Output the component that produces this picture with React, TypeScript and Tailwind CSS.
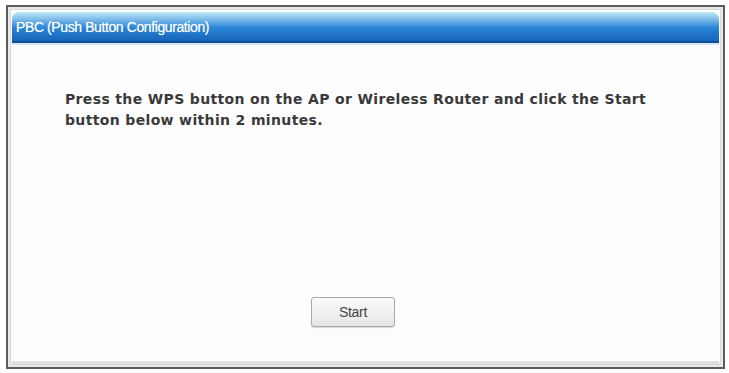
import React from "react";

const App = () => {
  return (
    <div className="w-[729px] h-[373px] bg-white overflow-hidden">
      <div className="pt-[5px] pl-[6px] pr-[4px] pb-[4px] h-full">
        <div className="h-full border-2 border-[#5c5c5c] bg-[#e9e9e9] p-[2px]">
          <div className="h-full flex flex-col bg-[#fdfdfd] border border-[#d8d8d8] px-[1px] pt-[2px]">
            <div className="h-[31px] rounded-t-[7px] bg-gradient-to-b from-[#bfeaf7] via-[#2a86d6] to-[#1460b5] flex items-center pl-[4px] shadow-[inset_0_-2px_0_#0f4f98]">
              <span className="text-white text-[14px] tracking-[-0.4px] font-['Liberation_Sans',sans-serif] [text-shadow:0_0_1px_rgba(255,255,255,0.6)]">
                PBC (Push Button Configuration)
              </span>
            </div>
            <div className="h-[2px] bg-[#d6e6f5]" />
            <div className="flex-1 flex flex-col pl-[53px] pt-[44px]">
              <p className="text-[14px] leading-[21px] font-bold text-[#3a3a3a] font-['DejaVu_Sans',sans-serif] tracking-[0.35px] w-[600px]">
                Press the WPS button on the AP or Wireless Router and click the Start button below within 2 minutes.
              </p>
              <div className="flex-1" />
              <div className="pl-[246px] mb-[34px]">
                <button
                  type="button"
                  className="w-[84px] h-[30px] rounded-[3px] border border-[#a9a9a9] bg-gradient-to-b from-[#fbfbfb] to-[#e6e6e6] text-[14px] text-[#444] font-['Liberation_Sans',sans-serif] tracking-[-0.3px] shadow-[0_1px_1px_rgba(0,0,0,0.15)]"
                >
                  Start
                </button>
              </div>
            </div>
            <div className="h-[3px] bg-[#e0e0e0]" />
          </div>
        </div>
      </div>
    </div>
  );
};

export default App;
